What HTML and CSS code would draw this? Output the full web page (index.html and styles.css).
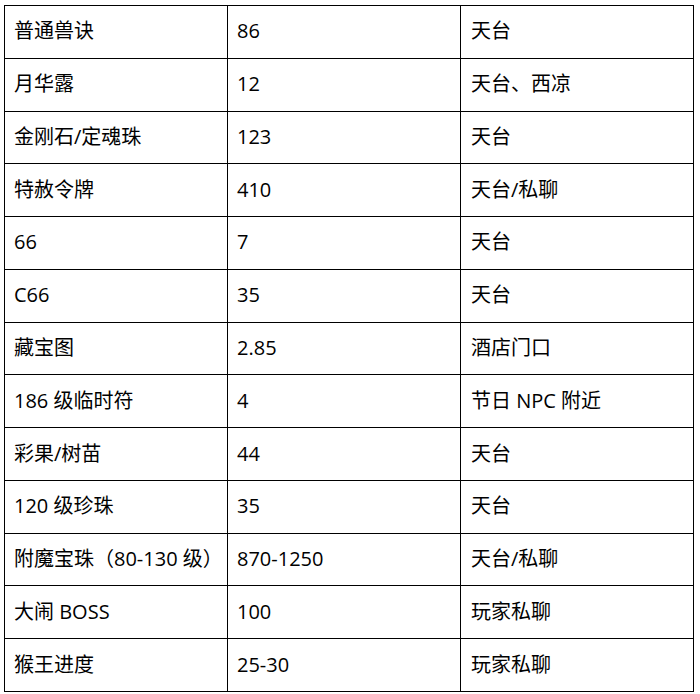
FILE: index.html
```html
<!DOCTYPE html>
<html lang="zh-CN">
<head>
<meta charset="utf-8">
<title>价格表</title>
<link rel="stylesheet" href="styles.css">
</head>
<body>
<table class="price-table">
  <colgroup>
    <col class="col-name">
    <col class="col-price">
    <col class="col-place">
  </colgroup>
  <tbody>
    <tr><td>普通兽诀</td><td>86</td><td>天台</td></tr>
    <tr><td>月华露</td><td>12</td><td>天台、西凉</td></tr>
    <tr><td>金刚石/定魂珠</td><td>123</td><td>天台</td></tr>
    <tr><td>特赦令牌</td><td>410</td><td>天台/私聊</td></tr>
    <tr><td>66</td><td>7</td><td>天台</td></tr>
    <tr><td>C66</td><td>35</td><td>天台</td></tr>
    <tr><td>藏宝图</td><td>2.85</td><td>酒店门口</td></tr>
    <tr><td>186 级临时符</td><td>4</td><td>节日 NPC 附近</td></tr>
    <tr><td>彩果/树苗</td><td>44</td><td>天台</td></tr>
    <tr><td>120 级珍珠</td><td>35</td><td>天台</td></tr>
    <tr><td>附魔宝珠（80-130 级）</td><td>870-1250</td><td>天台/私聊</td></tr>
    <tr><td>大闹 BOSS</td><td>100</td><td>玩家私聊</td></tr>
    <tr><td>猴王进度</td><td>25-30</td><td>玩家私聊</td></tr>
  </tbody>
</table>
</body>
</html>
```
FILE: styles.css
```css
html, body {
  margin: 0;
  padding: 0;
  background: #fff;
}
body {
  padding: 5px 0 0 4px;
  font-family: "Open Sans", "Noto Sans CJK SC", sans-serif;
  color: #000;
}
.price-table {
  border-collapse: collapse;
  table-layout: fixed;
  width: 690px;
}
.col-name { width: 223px; }
.col-price { width: 233px; }
.col-place { width: 233px; }
.price-table td {
  border: 1px solid #000;
  height: 52.77px;
  box-sizing: border-box;
  padding: 0 0 1px 9px;
  font-size: 20px;
  line-height: 1;
  vertical-align: middle;
  white-space: nowrap;
}
.price-table td:nth-child(3) {
  padding-left: 10px;
}
```
